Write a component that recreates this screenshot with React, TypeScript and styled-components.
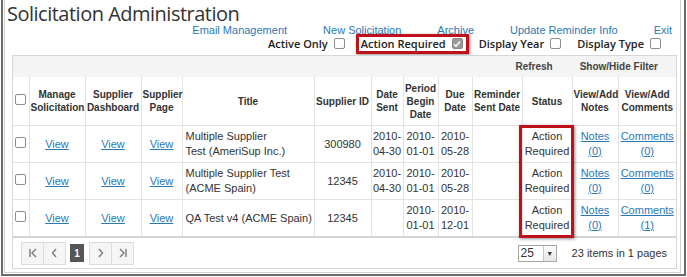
import React from "react";
import styled, { createGlobalStyle } from "styled-components";

const GlobalStyle = createGlobalStyle`
  html, body { margin: 0; padding: 0; background: #fff; }
  body { font-family: "Liberation Sans", Arial, sans-serif; color: #333; }
`;

const linkBlue = "#2a78b6";
const cellLine = "#e3e3e3";

const Frame = styled.div`
  box-sizing: border-box;
  width: 685px;
  height: 276px;
  margin-left: 1px;
  border: 2px solid #6a6a6a;
  border-top: none;
  padding: 0 3px 1px 1px;
  display: flex;
`;

const Panel = styled.div`
  flex: 1;
  display: flex;
  flex-direction: column;
  border: 1px solid #cfcfcf;
  border-top: none;
  padding: 0 3px 3px 2px;
`;

const Title = styled.h1`
  margin: 0 0 -4px;
  height: 28px;
  font-family: "Open Sans", "Liberation Sans", sans-serif;
  font-weight: 400;
  font-size: 20px;
  letter-spacing: -0.5px;
  line-height: 28px;
  color: #333;
`;

const LinkBar = styled.div`
  display: flex;
  justify-content: flex-end;
  gap: 36px;
  padding-right: 5px;
  height: 12px;
  align-items: center;
  font-size: 11px;
`;

const TopLink = styled.a`
  color: ${linkBlue};
  text-decoration: none;
`;

const OptionBar = styled.div`
  display: flex;
  justify-content: flex-end;
  align-items: center;
  gap: 16px;
  padding-right: 16px;
  margin-top: 1px;
  height: 13px;
  font-family: "Open Sans", "Liberation Sans", sans-serif;
  font-weight: 600;
  font-size: 11px;
  color: #222;
`;

const Option = styled.label<{ $marked?: boolean }>`
  display: flex;
  align-items: center;
  gap: 6px;
  ${(p) =>
    p.$marked &&
    `
    border: 3px solid #c0101a;
    box-shadow: 1px 1px 3px rgba(0,0,0,0.45);
    padding: 0 3px 0 2px;
    margin: 0 -6px 0 -5px;
    height: 14px;
  `}
`;

const Box = styled.span<{ $checked?: boolean }>`
  box-sizing: border-box;
  display: inline-flex;
  align-items: center;
  justify-content: center;
  width: 11px;
  height: 11px;
  border: 1px solid ${(p) => (p.$checked ? "#8a8a8a" : "#8c8c8c")};
  border-radius: 2px;
  background: ${(p) => (p.$checked ? "#9a9a9a" : "#fff")};
`;

const Grid = styled.div`
  position: relative;
  box-sizing: border-box;
  width: 665px;
  margin: 5px 0 0 5px;
  border: 1px solid #d6d6d6;
  flex: 1;
  display: flex;
  flex-direction: column;
`;

const Toolbar = styled.div`
  display: flex;
  justify-content: flex-end;
  align-items: center;
  gap: 27px;
  height: 21px;
  padding-right: 18px;
  background: #f4f4f4;
  font-weight: bold;
  font-size: 10px;
  color: #444;
`;

const Table = styled.table`
  width: 100%;
  border-collapse: collapse;
  table-layout: fixed;
`;

const Th = styled.th`
  height: 48px;
  padding: 0 1px;
  border-left: 1px solid ${cellLine};
  border-bottom: 1px solid ${cellLine};
  font-size: 10px;
  line-height: 13px;
  font-weight: bold;
  color: #333;
  text-align: center;
  vertical-align: middle;
  &:first-child { border-left: none; }
`;

const Td = styled.td<{ $left?: boolean }>`
  height: 36px;
  padding: ${(p) => (p.$left ? "0 1px 0 3px" : "0 1px")};
  border-left: 1px solid ${cellLine};
  border-bottom: 1px solid ${cellLine};
  font-size: 11px;
  line-height: 15px;
  color: #333;
  text-align: ${(p) => (p.$left ? "left" : "center")};
  vertical-align: middle;
  &:first-child { border-left: none; }
`;

const Row = styled.tr`
  &:last-child td { border-bottom: 2px solid #d4d4d4; }
`;

const CellLink = styled.a`
  color: ${linkBlue};
  text-decoration: underline;
`;

const StatusMark = styled.div`
  position: absolute;
  left: 506px;
  top: 69px;
  width: 55px;
  height: 113px;
  box-sizing: border-box;
  border: 3px solid #c0101a;
  box-shadow: 1px 1px 3px rgba(0,0,0,0.45);
  pointer-events: none;
`;

const Pager = styled.div`
  flex: 1;
  display: flex;
  align-items: center;
  padding: 0 9px 0 8px;
  font-size: 11px;
  color: #333;
`;

const PageButtons = styled.div`
  display: flex;
  align-items: center;
`;

const NavButton = styled.span`
  box-sizing: border-box;
  width: 23px;
  height: 23px;
  display: inline-flex;
  align-items: center;
  justify-content: center;
  border: 1px solid #dcdcdc;
  background: #f5f5f5;
  & + & { margin-left: -1px; }
`;

const CurrentPage = styled.span`
  width: 14px;
  height: 18px;
  margin: 0 5px 0 4px;
  display: inline-flex;
  align-items: center;
  justify-content: center;
  background: #565656;
  color: #fff;
  font-size: 10px;
  font-weight: bold;
`;

const SizePicker = styled.div`
  margin-left: auto;
  display: flex;
  height: 17px;
  box-sizing: border-box;
  border: 1px solid #a8a8a8;
`;

const SizeValue = styled.span`
  width: 22px;
  padding-left: 2px;
  font-size: 12px;
  line-height: 15px;
`;

const SizeArrow = styled.span`
  width: 12px;
  border-left: 1px solid #c8c8c8;
  background: linear-gradient(#fafafa, #e6e6e6);
  display: flex;
  align-items: center;
  justify-content: center;
  font-size: 7px;
  color: #333;
`;

const PageInfo = styled.span`
  margin-left: 15px;
`;

function Chevron({ kind }: { kind: "first" | "prev" | "next" | "last" }) {
  const paths: Record<string, string> = {
    first: "M3 2v8M9 2L5 6l4 4",
    prev: "M7 2L3.5 6 7 10",
    next: "M4 2l3.5 4L4 10",
    last: "M3 2l4 4-4 4M9 2v8",
  };
  return (
    <svg width="12" height="12" viewBox="0 0 12 12">
      <path d={paths[kind]} fill="none" stroke="#7a7a7a" strokeWidth="1.4" />
    </svg>
  );
}

function Check() {
  return (
    <svg width="8" height="8" viewBox="0 0 8 8">
      <path d="M1 4.2l2 2L7 1.5" fill="none" stroke="#fff" strokeWidth="1.5" />
    </svg>
  );
}

const columns = [
  { w: 16, label: "" },
  { w: 56, label: "Manage Solicitation" },
  { w: 56, label: "Supplier Dashboard" },
  { w: 41, label: "Supplier Page" },
  { w: 132, label: "Title" },
  { w: 57, label: "Supplier ID" },
  { w: 32, label: "Date Sent" },
  { w: 35, label: "Period Begin Date" },
  { w: 34, label: "Due Date" },
  { w: 50, label: "Reminder Sent Date" },
  { w: 50, label: "Status" },
  { w: 46, label: "View/Add Notes" },
  { w: 58, label: "View/Add Comments" },
];

interface Solicitation {
  title: string;
  supplierId: string;
  sent?: [string, string];
  begin: [string, string];
  due: [string, string];
  notes: number;
  comments: number;
}

const rows: Solicitation[] = [
  {
    title: "Multiple Supplier Test\u00a0(AmeriSup Inc.)",
    supplierId: "300980",
    sent: ["2010-", "04-30"],
    begin: ["2010-", "01-01"],
    due: ["2010-", "05-28"],
    notes: 0,
    comments: 0,
  },
  {
    title: "Multiple Supplier Test (ACME Spain)",
    supplierId: "12345",
    sent: ["2010-", "04-30"],
    begin: ["2010-", "01-01"],
    due: ["2010-", "05-28"],
    notes: 0,
    comments: 0,
  },
  {
    title: "QA Test v4 (ACME Spain)",
    supplierId: "12345",
    begin: ["2010-", "01-01"],
    due: ["2010-", "12-01"],
    notes: 0,
    comments: 1,
  },
];

function TwoLine({ parts }: { parts?: [string, string] }) {
  if (!parts) return null;
  return (
    <>
      {parts[0]}
      <br />
      {parts[1]}
    </>
  );
}

export default function App() {
  return (
    <>
      <GlobalStyle />
      <Frame>
        <Panel>
          <Title>Solicitation Administration</Title>
          <LinkBar>
            <TopLink>Email Management</TopLink>
            <TopLink>New Solicitation</TopLink>
            <TopLink>Archive</TopLink>
            <TopLink>Update Reminder Info</TopLink>
            <TopLink>Exit</TopLink>
          </LinkBar>
          <OptionBar>
            <Option>
              Active Only <Box />
            </Option>
            <Option $marked>
              Action Required{" "}
              <Box $checked>
                <Check />
              </Box>
            </Option>
            <Option>
              Display Year <Box />
            </Option>
            <Option>
              Display Type <Box />
            </Option>
          </OptionBar>

          <Grid>
            <Toolbar>
              <span>Refresh</span>
              <span>Show/Hide Filter</span>
            </Toolbar>
            <Table>
              <colgroup>
                {columns.map((c, i) => (
                  <col key={i} style={{ width: c.w }} />
                ))}
              </colgroup>
              <thead>
                <tr>
                  {columns.map((c, i) => (
                    <Th key={i}>{i === 0 ? <Box /> : c.label}</Th>
                  ))}
                </tr>
              </thead>
              <tbody>
                {rows.map((r, i) => (
                  <Row key={i}>
                    <Td>
                      <Box />
                    </Td>
                    <Td><CellLink>View</CellLink></Td>
                    <Td><CellLink>View</CellLink></Td>
                    <Td><CellLink>View</CellLink></Td>
                    <Td $left>{r.title}</Td>
                    <Td>{r.supplierId}</Td>
                    <Td><TwoLine parts={r.sent} /></Td>
                    <Td><TwoLine parts={r.begin} /></Td>
                    <Td><TwoLine parts={r.due} /></Td>
                    <Td />
                    <Td>Action Required</Td>
                    <Td><CellLink>Notes ({r.notes})</CellLink></Td>
                    <Td><CellLink>Comments ({r.comments})</CellLink></Td>
                  </Row>
                ))}
              </tbody>
            </Table>
            <Pager>
              <PageButtons>
                <NavButton><Chevron kind="first" /></NavButton>
                <NavButton><Chevron kind="prev" /></NavButton>
                <CurrentPage>1</CurrentPage>
                <NavButton><Chevron kind="next" /></NavButton>
                <NavButton><Chevron kind="last" /></NavButton>
              </PageButtons>
              <SizePicker>
                <SizeValue>25</SizeValue>
                <SizeArrow>▼</SizeArrow>
              </SizePicker>
              <PageInfo>23 items in 1 pages</PageInfo>
            </Pager>
            <StatusMark />
          </Grid>
        </Panel>
      </Frame>
    </>
  );
}
